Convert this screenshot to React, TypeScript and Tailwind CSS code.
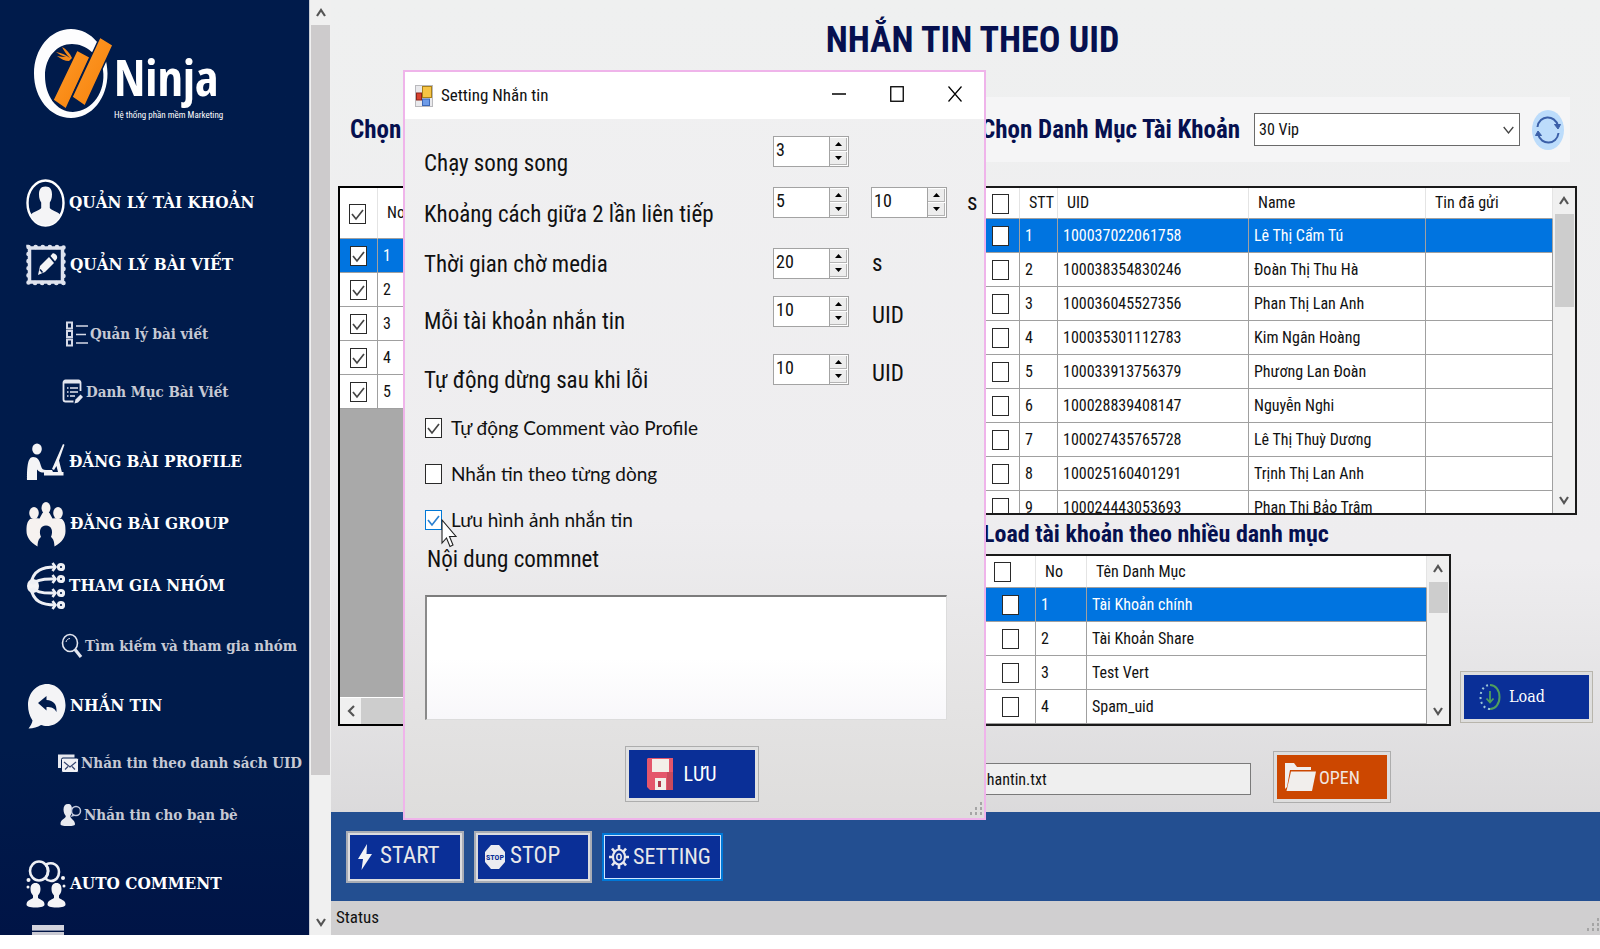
import React from 'react';

const menu = "flex items-center h-[62px] pl-[26px] gap-1 text-[17px] font-bold text-white whitespace-nowrap";
const submenu = "flex items-center gap-[2px] text-[15px] font-bold text-[#c6c9d4] whitespace-nowrap";

const uids = [
  ['100037022061758', 'Lê Thị Cẩm Tú'],
  ['100038354830246', 'Đoàn Thị Thu Hà'],
  ['100036045527356', 'Phan Thị Lan Anh'],
  ['100035301112783', 'Kim Ngân Hoàng'],
  ['100033913756379', 'Phương Lan Đoàn'],
  ['100028839408147', 'Nguyễn Nghi'],
  ['100027435765728', 'Lê Thị Thuỳ Dương'],
  ['100025160401291', 'Trịnh Thị Lan Anh'],
  ['100024443053693', 'Phan Thị Bảo Trâm'],
];

const categories = ['Tài Khoản chính', 'Tài Khoản Share', 'Test Vert', 'Spam_uid'];

/* ---------- Iconos del menú ---------- */

function UserIcon() {
  return (
    <svg width="39" height="48" viewBox="0 0 39 48">
      <ellipse cx="19.5" cy="24" rx="18" ry="22.5" fill="none" stroke="#fff" strokeWidth="2.4" />
      <path d="M19.500 7.500c-5 0-6.500 3.500-6.500 8 0 4 1 6 2.200 8v5.500c-2 3-8 3.500-10.700 7C7.500 42.500 13 46.500 19.500 46.500s12-4 15-10.500c-2.700-3.500-8.700-4-10.700-7v-5.500c1.200-2 2.200-4 2.200-8 0-4.500-1.500-8-6.500-8z" fill="#f4f4f6" />
    </svg>
  );
}

function StampIcon() {
  return (
    <svg width="40" height="42" viewBox="0 0 40 42">
      <rect x="3.500" y="4" width="33" height="34" fill="none" stroke="#dfe3ee" strokeWidth="3.500" />
      <rect x="2.500" y="3" width="35" height="36" fill="none" stroke="#dfe3ee" strokeWidth="4.500" strokeLinecap="round" strokeDasharray="0.1 7" />
      <path d="M12 31l2-9 9-9 5 6-9 9z" fill="#f4f4f6" />
      <path d="M24.500 12l2-2.500c1-1 3 .2 4 1.800s.8 3 0 4l-1.500 2z" fill="#f4f4f6" />
      <path d="M14 25.500l2.500 3" stroke="#001b4c" strokeWidth="1.500" />
    </svg>
  );
}

function ListIcon() {
  return (
    <svg width="22" height="26" viewBox="0 0 22 26" fill="none" stroke="#d5d9e6">
      <rect x="1" y="1.500" width="5" height="6" strokeWidth="2" />
      <rect x="1" y="10" width="5" height="6" strokeWidth="2" />
      <rect x="1" y="18.500" width="5" height="6" strokeWidth="2" />
      <path d="M10 5h12M10 13.500h10M10 22h12" strokeWidth="1.600" />
    </svg>
  );
}

function NoteIcon() {
  return (
    <svg width="22" height="26" viewBox="0 0 22 26" fill="none" stroke="#e3e6ef">
      <path d="M18.500 12V3.500a2 2 0 0 0-2-2H3.500a2 2 0 0 0-2 2v17a2 2 0 0 0 2 2h8" strokeWidth="1.800" />
      <path d="M2 3h16" strokeWidth="3" />
      <path d="M5 9h1.500M5 13h1.500M5 17h1.500M8 9h8M8 13h8M8 17h5" strokeWidth="1.700" />
      <path d="M12.500 24.500l1-4 5-5 2.500 2.500-5 5.500z" fill="#e3e6ef" stroke="none" />
    </svg>
  );
}

function DeskIcon() {
  return (
    <svg width="39" height="38" viewBox="0 0 39 38" fill="#f4f4f6">
      <ellipse cx="11" cy="6" rx="4.800" ry="5.500" />
      <path d="M1 37c0-12 .5-23 6-23 4.500 0 6.500 3 8 9 1 3 2 4 5 4h6l1 2h10.500v3.500H18v-3c-3 0-5-.5-7-3V37z" />
      <path d="M26 26L37 1l1.500.8L33 17.500l3 12-4-.5-1.500-6-2.500 4z" />
    </svg>
  );
}

function GroupIcon() {
  return (
    <svg width="40" height="46" viewBox="0 0 40 46" fill="#f6f2f0">
      <ellipse cx="20" cy="7" rx="4.500" ry="6" />
      <ellipse cx="8" cy="12" rx="4.800" ry="6" />
      <ellipse cx="32" cy="12" rx="4.800" ry="6" />
      <path d="M4 18l4.500-1 5 .5L16.500 12h7l3 5.500 5-.5 4.500 1c3 3 3.500 6 3.500 12 0 6-3 11-11 15.500-.3-5-1-7.500-3.500-9.500 2.500-6 .5-11.500-5-11.500s-7.500 5.500-5 11.500c-2.500 2-3.200 4.500-3.500 9.500C4 41 .5 36 .5 30c0-6 .5-9 3.500-12z" />
    </svg>
  );
}

function NetworkIcon() {
  return (
    <svg width="39" height="48" viewBox="0 0 39 48" fill="none" stroke="#eef0f5" strokeWidth="3">
      <ellipse cx="7" cy="24" rx="6" ry="7" fill="#f4f4f6" stroke="none" />
      <path d="M5 22C7 8 17 5 29 5M6 22c5-5 13-5.500 23-5M6 26c5 5 13 5.500 23 5M5 26c2 14 12 17 24 17" />
      <path d="M26.500 1l3 4-3 4M26.500 13l3 4-3 4M26.500 27l3 4-3 4M26.500 39l3 4-3 4" strokeWidth="2.600" />
      <circle cx="35" cy="5" r="2.600" />
      <circle cx="35" cy="17" r="2.600" />
      <circle cx="35" cy="31" r="2.600" />
      <circle cx="35" cy="43" r="2.600" />
    </svg>
  );
}

function SearchIcon() {
  return (
    <svg width="22" height="26" viewBox="0 0 22 26" fill="none" stroke="#e3e6ef">
      <ellipse cx="9" cy="10" rx="7.500" ry="8.500" strokeWidth="1.600" />
      <path d="M5 9c.5-2 2-3.500 4-3.500" strokeWidth="1" />
      <path d="M14 16.500l6 7.500" strokeWidth="3.200" />
    </svg>
  );
}

function ReplyIcon() {
  return (
    <svg width="40" height="46" viewBox="0 0 40 46">
      <path d="M21 1c10.500 0 18.500 9 18.500 21S31.500 43 21 43c-2.500 0-4.500-.5-6-1-3.500 2-7.500 3.500-12.500 3.500 2.500-3 3.500-5.500 4-8C3.500 33 2 28 2 22 2 10 10.500 1 21 1z" fill="#f4f4f6" />
      <path d="M12 20l8.500-7v4c7 .5 10.500 4 10 12-2-4-5-5-10-5v3.500z" fill="#001b4c" />
    </svg>
  );
}

function MailsIcon() {
  return (
    <svg width="22" height="22" viewBox="0 0 22 22">
      <path d="M1 2.500h16.500V6H5.500v10H1z" fill="#e6e8ef" />
      <rect x="4.500" y="6" width="17" height="14.500" rx="1.500" fill="#f0f1f5" stroke="#001b4c" />
      <path d="M7 10l6 5 6-5M8 17.500l3-3M18 17.500l-3-3" stroke="#37466f" strokeWidth="1.200" fill="none" />
    </svg>
  );
}

function FriendIcon() {
  return (
    <svg width="22" height="24" viewBox="0 0 22 24">
      <path d="M8 1c-3 0-4.500 2-4.500 5.500S5 12 5.800 13c0 3-5.300 3-5.300 8 0 1.500 2 2 7.500 2s7-.5 7-2c0-4-4.500-5-4.800-8C11 12 12 10 12 6.500S11 1 8 1z" fill="#e8eaf0" />
      <circle cx="16" cy="8" r="4.500" fill="none" stroke="#c3c9dc" strokeWidth="1.500" />
      <path d="M12.500 11l-2 3 4-1" fill="#c3c9dc" />
    </svg>
  );
}

function CommentIcon() {
  return (
    <svg width="40" height="48" viewBox="0 0 40 48">
      <g fill="none" stroke="#eef0f5" strokeWidth="2.600">
        <ellipse cx="13" cy="11" rx="9" ry="9.500" />
        <path d="M20 4.500c7-3.500 13 1 13 7.500 0 5-3 9-8 9-2.500 0-4-.8-5.500-2.500 3-4 4-9 .5-14z" />
      </g>
      <g fill="#f4f4f6">
        <circle cx="2.500" cy="20" r="2" />
        <circle cx="2" cy="27" r="1.500" />
        <circle cx="37" cy="18" r="2" />
        <circle cx="38" cy="26" r="1.500" />
        <path d="M9.500 23c-3.500 0-5 2.500-5 6s1.300 5 2.500 6.500v2.500C4 40 .5 40.500.5 44.500c0 2 3 3 9 3s9-1 9-3c0-4-3.500-4.500-6.500-6.500v-2.500c1.200-1.500 2.500-3 2.500-6.500s-1.500-6-5-6z" />
        <path d="M30.500 23c-3.500 0-5 2.500-5 6s1.300 5 2.500 6.500v2.500c-3 2-6.500 2.500-6.500 6.500 0 2 3 3 9 3s9-1 9-3c0-4-3.500-4.500-6.500-6.500v-2.500c1.200-1.500 2.500-3 2.500-6.500s-1.500-6-5-6z" />
      </g>
    </svg>
  );
}

function Logo() {
  return (
    <svg width="80" height="94" viewBox="0 0 80 94">
      <defs>
        <linearGradient id="blade" x1="0" y1="0" x2="1" y2="1">
          <stop offset="0" stopColor="#ff9c2b" />
          <stop offset="1" stopColor="#f57f08" />
        </linearGradient>
      </defs>
      <path d="M37 1C16 1 0 21 0 45.500S16 90 37 90s36.500-20 36.500-44.500C73.500 21 58 1 37 1zm1 15c14 0 27 11 31 26 3 21-10 41-30 42C22 84 11 67 11 48s12-32 27-32z" fill="#fdfdfe" />
      <path d="M43 22l13 7-24 52-13-9z" fill="url(#blade)" stroke="#001b4c" strokeWidth="1.500" />
      <path d="M66 9l13 8-28 61-13-9z" fill="url(#blade)" stroke="#001b4c" strokeWidth="1.500" />
      <path d="M22 24c6 1 10 3 14 6-4-4-6-7-8-11 4 2 8 6 10 11l-3 3c-4 0-8-2-12-5 3 .5 6 1 9 1-4-1-7-3-10-5z" fill="#f58a1a" />
    </svg>
  );
}

/* ---------- Controles ---------- */

function Check({ label, checked = false, accent = false }: { label: string; checked?: boolean; accent?: boolean }) {
  return (
    <span className="relative inline-block h-5 w-[17px] shrink-0 align-middle">
      <input
        type="checkbox"
        aria-label={label}
        defaultChecked={checked}
        className={
          accent
            ? "peer block h-5 w-[17px] appearance-none border border-[#0078d7] bg-white"
            : "peer block h-5 w-[17px] appearance-none border border-[#2a2a2a] bg-white"
        }
      />
      <svg
        viewBox="0 0 17 20"
        className={
          accent
            ? "pointer-events-none absolute inset-0 hidden peer-checked:block text-[#2a7fd0]"
            : "pointer-events-none absolute inset-0 hidden peer-checked:block text-[#444]"
        }
      >
        <path d="M3 10l4 5 7-9" fill="none" stroke="currentColor" strokeWidth="1.700" />
      </svg>
    </span>
  );
}

function Spin({ label, value }: { label: string; value: number }) {
  return (
    <div className="flex h-[31px] w-[76px] border border-[#a3a3a3] bg-white">
      <input
        type="text"
        aria-label={label}
        defaultValue={value}
        className="min-w-0 flex-1 bg-transparent pb-1 pl-[2px] text-[18px] leading-6 outline-none"
      />
      <div className="mr-[1px] flex w-[18px] flex-col gap-[1px] border-l border-[#a3a3a3] py-[1px]">
        <button aria-label="Tăng" className="flex flex-1 items-center justify-center border-r border-b border-[#b4b4b4] bg-[#ededed]">
          <svg width="7" height="4"><path d="M0 4L3.500 0 7 4z" /></svg>
        </button>
        <button aria-label="Giảm" className="flex flex-1 items-center justify-center border-r border-b border-[#b4b4b4] bg-[#ededed]">
          <svg width="7" height="4"><path d="M0 0h7L3.500 4z" /></svg>
        </button>
      </div>
    </div>
  );
}

function Arrow({ dir }: { dir: 'up' | 'down' | 'left' }) {
  const d = dir === 'up' ? 'M2 9l4-6 4 6' : dir === 'down' ? 'M2 3l4 6 4-6' : 'M9 1L4 6l5 5';
  return (
    <svg width="12" height="12" viewBox="0 0 12 12" fill="none" stroke="#555" strokeWidth="2.200">
      <path d={d} />
    </svg>
  );
}

function Grip() {
  return (
    <svg width="13" height="13" viewBox="0 0 13 13" fill="#a5a5a5">
      <path d="M10 0h2v3h-2zM10 5h2v3h-2zM10 10h2v3h-2zM5 5h2v3H5zM5 10h2v3H5zM0 10h2v3H0z" />
    </svg>
  );
}

/* ---------- Barra lateral ---------- */

function Sidebar() {
  return (
    <aside className="w-[310px] shrink-0 overflow-hidden border-r border-[#c8ccd4] bg-gradient-to-b from-[#001b4b] from-80% to-[#001446] font-['DejaVu_Serif_Condensed','DejaVu_Serif',serif]">
      <div className="flex h-[172px] pt-[28px] pl-[34px]">
        <Logo />
        <div className="flex flex-col pt-[17px] text-white">
          <span className="font-['Open_Sans_Condensed','Open_Sans',sans-serif] text-[50px] leading-[64px]">Ninja</span>
          <span className="font-['Roboto_Condensed',sans-serif] text-[9px] leading-3">Hệ thống phần mềm Marketing</span>
        </div>
      </div>
      <nav>
        <a href="#tai-khoan" className={menu}><UserIcon />QUẢN LÝ TÀI KHOẢN</a>
        <a href="#bai-viet" className={menu}><StampIcon />QUẢN LÝ BÀI VIẾT</a>
        <div className="pt-[9px] pb-[10px]">
          <a href="#ds-bai-viet" className={submenu + " h-[58px] pl-[66px]"}><ListIcon />Quản lý bài viết</a>
          <a href="#danh-muc" className={submenu + " h-[58px] pl-[62px]"}><NoteIcon />Danh Mục Bài Viết</a>
        </div>
        <a href="#profile" className={menu}><DeskIcon />ĐĂNG BÀI PROFILE</a>
        <a href="#group" className={menu}><GroupIcon />ĐĂNG BÀI GROUP</a>
        <a href="#tham-gia" className={menu}><NetworkIcon />THAM GIA NHÓM</a>
        <a href="#tim-kiem" className={submenu + " h-[58px] pl-[61px]"}><SearchIcon />Tìm kiếm và tham gia nhóm</a>
        <a href="#nhan-tin" className={menu}><ReplyIcon />NHẮN TIN</a>
        <a href="#nhan-tin-uid" className={submenu + " h-[52px] pl-[57px]"}><MailsIcon />Nhắn tin theo danh sách UID</a>
        <a href="#nhan-tin-ban-be" className={submenu + " h-[52px] pl-[60px]"}><FriendIcon />Nhắn tin cho bạn bè</a>
        <a href="#auto-comment" className={menu + " mt-3"}><CommentIcon />AUTO COMMENT</a>
        <div className="h-5 pt-[10px] pl-8">
          <svg width="32" height="10">
            <rect width="32" height="5" fill="#d3d3dc" />
            <rect y="5" width="32" height="1" fill="#7c86a2" />
            <rect y="7" width="32" height="3" fill="#c9c9d2" />
          </svg>
        </div>
      </nav>
    </aside>
  );
}

/* ---------- Tablas ---------- */

const cell = "h-[34px] border-r border-b border-[#a0a0a0] px-[5px] whitespace-nowrap";
const th = "border-r border-b border-r-[#e4e4e4] border-b-[#a0a0a0] bg-white px-[9px] text-left font-normal whitespace-nowrap";

function LeftTable() {
  return (
    <div className="flex flex-1 flex-col border-2 border-black bg-[#a9a9a9]">
      <table className="w-full table-fixed border-separate border-spacing-0">
        <colgroup>
          <col className="w-[38px]" />
          <col className="w-[50px]" />
          <col />
        </colgroup>
        <thead>
          <tr className="h-[51px]">
            <th className={th}><Check label="Chọn tất cả" checked /></th>
            <th className={th}>No</th>
            <th className={th}></th>
          </tr>
        </thead>
        <tbody>
          {[1, 2, 3, 4, 5].map((n) => (
            <tr key={n} className={n === 1 ? "bg-[#0074e0] text-white" : "bg-white"}>
              <td className={cell + " pl-[10px]"}><Check label={`Dòng ${n}`} checked /></td>
              <td className={cell}>{n}</td>
              <td className={cell}></td>
            </tr>
          ))}
        </tbody>
      </table>
      <div className="mt-auto flex h-[27px] border-t border-white bg-[#f0f0f0]">
        <button aria-label="Cuộn trái" className="flex w-[21px] items-center justify-center"><Arrow dir="left" /></button>
        <div className="w-[300px] bg-[#cdcdcd]"></div>
      </div>
    </div>
  );
}

function UidTable() {
  return (
    <div className="mr-[23px] flex h-[329px] overflow-hidden border-2 border-[#1a1a1a] bg-white">
      <div className="flex-1 overflow-hidden">
        <table className="w-full table-fixed border-separate border-spacing-0">
          <colgroup>
            <col className="w-[43px]" />
            <col className="w-[38px]" />
            <col className="w-[191px]" />
            <col className="w-[177px]" />
            <col />
          </colgroup>
          <thead>
            <tr className="h-[31px]">
              <th className={th + " pl-[15px]"}><Check label="Chọn tất cả UID" /></th>
              <th className={th}>STT</th>
              <th className={th}>UID</th>
              <th className={th}>Name</th>
              <th className={th}>Tin đã gửi</th>
            </tr>
          </thead>
          <tbody>
            {uids.map(([uid, name], i) => (
              <tr key={uid} className={i === 0 ? "bg-[#0074e0] text-white" : "bg-white"}>
                <td className={cell + " pl-[15px]"}><Check label={name} /></td>
                <td className={cell}>{i + 1}</td>
                <td className={cell}>{uid}</td>
                <td className={cell}>{name}</td>
                <td className={cell}></td>
              </tr>
            ))}
          </tbody>
        </table>
      </div>
      <div className="flex w-[22px] flex-col items-center bg-[#f0f0f0]">
        <button aria-label="Cuộn lên" className="flex h-[26px] items-center"><Arrow dir="up" /></button>
        <div className="h-[93px] w-[19px] bg-[#cdcdcd]"></div>
        <button aria-label="Cuộn xuống" className="mt-auto flex h-[26px] items-center"><Arrow dir="down" /></button>
      </div>
    </div>
  );
}

function CategoryTable() {
  return (
    <div className="flex h-[172px] w-[476px] overflow-hidden border-2 border-[#1a1a1a] bg-white">
      <div className="flex-1 overflow-hidden">
        <table className="w-full table-fixed border-separate border-spacing-0">
          <colgroup>
            <col className="w-[59px]" />
            <col className="w-[51px]" />
            <col />
          </colgroup>
          <thead>
            <tr className="h-[32px]">
              <th className={th + " pl-[17px]"}><Check label="Chọn tất cả danh mục" /></th>
              <th className={th}>No</th>
              <th className={th}>Tên Danh Mục</th>
            </tr>
          </thead>
          <tbody>
            {categories.map((c, i) => (
              <tr key={c} className={i === 0 ? "bg-[#0074e0] text-white" : "bg-white"}>
                <td className={cell + " pl-[25px]"}><Check label={c} /></td>
                <td className={cell}>{i + 1}</td>
                <td className={cell}>{c}</td>
              </tr>
            ))}
          </tbody>
        </table>
      </div>
      <div className="flex w-[22px] flex-col items-center bg-[#f0f0f0]">
        <button aria-label="Cuộn lên" className="flex h-[26px] items-center"><Arrow dir="up" /></button>
        <div className="h-[31px] w-[19px] bg-[#cdcdcd]"></div>
        <button aria-label="Cuộn xuống" className="mt-auto flex h-[26px] items-center"><Arrow dir="down" /></button>
      </div>
    </div>
  );
}

/* ---------- Diálogo de ajustes ---------- */

function SettingDialog() {
  return (
    <section
      role="dialog"
      aria-label="Setting Nhắn tin"
      className="absolute top-[70px] left-[72px] w-[583px] border-2 border-[#efb4ea] bg-gradient-to-b from-[#f0f0f1] via-[#eeedef] via-60% to-[#dedddc] text-[#111]"
    >
      <header className="flex h-[47px] items-center bg-white pl-[10px]">
        <svg width="18" height="22" viewBox="0 0 18 22">
          <rect x=".5" y=".5" width="17" height="21" fill="#e9e9ec" stroke="#b9b9bd" />
          <rect x="7.500" y="1.500" width="9" height="11" fill="#f6c445" stroke="#a8801b" />
          <rect x="1.500" y="8" width="5" height="7" fill="#d8412f" stroke="#8d2418" />
          <rect x="7.500" y="14" width="7" height="6.500" fill="#6d9be8" stroke="#3c67b5" />
        </svg>
        <h2 className="flex-1 pl-2 text-[17px]">Setting Nhắn tin</h2>
        <div className="flex items-center pb-[3px]">
          <button aria-label="Thu nhỏ" className="flex w-[58px] justify-center">
            <svg width="14" height="16"><path d="M0 8h14" stroke="#000" strokeWidth="1.500" /></svg>
          </button>
          <button aria-label="Phóng to" className="flex w-[58px] justify-center">
            <svg width="14" height="16"><rect x=".75" y=".75" width="12.500" height="14.500" fill="none" stroke="#000" strokeWidth="1.300" /></svg>
          </button>
          <button aria-label="Đóng" className="flex w-[58px] justify-center">
            <svg width="14" height="16"><path d="M.5.5l13 15M13.500.5l-13 15" stroke="#000" strokeWidth="1.200" /></svg>
          </button>
        </div>
      </header>

      <div className="flex pl-[19px]">
        <div className="flex w-[349px] flex-col pt-[31px] text-[23px] leading-7">
          <span>Chạy song song</span>
          <span className="mt-[23px]">Khoảng cách giữa 2 lần liên tiếp</span>
          <span className="mt-[22px]">Thời gian chờ media</span>
          <span className="mt-[29px]">Mỗi tài khoản nhắn tin</span>
          <span className="mt-[31px]">Tự động dừng sau khi lỗi</span>
        </div>
        <div className="flex flex-col pt-[17px] text-[23px] leading-[31px]">
          <Spin label="Chạy song song" value={3} />
          <div className="mt-[20px] flex items-center">
            <Spin label="Khoảng cách từ" value={5} />
            <div className="pl-[22px]"><Spin label="Khoảng cách đến" value={10} /></div>
            <span className="pl-5">s</span>
          </div>
          <div className="mt-[30px] flex items-center gap-[23px]">
            <Spin label="Thời gian chờ media" value={20} />
            <span>s</span>
          </div>
          <div className="mt-[17px] flex items-start gap-[23px]">
            <Spin label="Mỗi tài khoản nhắn tin" value={10} />
            <span className="pt-1">UID</span>
          </div>
          <div className="mt-[23px] flex items-start gap-[23px]">
            <Spin label="Tự động dừng sau khi lỗi" value={10} />
            <span className="pt-1">UID</span>
          </div>
        </div>
      </div>

      <div className="flex flex-col gap-[18px] pt-[19px] pl-[20px] font-['Lato',sans-serif] text-[19px] leading-7">
        <label className="flex items-center gap-[9px]"><Check label="Tự động Comment vào Profile" checked />Tự động Comment vào Profile</label>
        <label className="flex items-center gap-[9px]"><Check label="Nhắn tin theo từng dòng" />Nhắn tin theo từng dòng</label>
        <label className="flex items-center gap-[9px]"><Check label="Lưu hình ảnh nhắn tin" checked accent />Lưu hình ảnh nhắn tin</label>
      </div>

      <label htmlFor="comment" className="block pt-[12px] pl-[22px] text-[23px] leading-7">Nội dung commnet</label>
      <textarea
        id="comment"
        className="mt-[21px] mr-[37px] ml-[20px] block h-[125px] w-[522px] resize-none border border-t-2 border-l-2 border-[#dcdcdc] border-t-[#7c7c7c] border-l-[#8a8a8a] bg-gradient-to-b from-white from-50% to-[#f8f7fa] outline-none"
      ></textarea>

      <div className="flex justify-center pt-[26px] pr-[6px] pb-[16px]">
        <button className="flex h-[56px] w-[134px] items-center gap-[10px] border border-[#adadad] bg-[#0a2f97] pl-[21px] text-[20px] text-white shadow-[inset_0_0_0_3px_#e1e1e1]">
          <svg width="27" height="32" viewBox="0 0 27 32">
            <path d="M1 0h25v32H3l-3-3V1z" fill="#e4566b" />
            <path d="M20 14h6v18h-6z" fill="#c94a5c" />
            <rect x="5" y="1" width="17" height="13" fill="#f3efe9" />
            <rect x="8" y="20" width="11" height="12" fill="#f3efe9" />
            <rect x="11" y="23" width="3" height="6" fill="#b13a4c" />
          </svg>
          LƯU
        </button>
      </div>

      <div className="absolute right-[1px] bottom-[3px]"><Grip /></div>
      <svg className="absolute top-[447px] left-[36px]" width="17" height="29" viewBox="0 0 17 29">
        <path d="M1 1v23l4.500-5 3.500 8.500 3-1.500-3.500-8.500H15z" fill="#fff" stroke="#222" strokeWidth="1.100" />
      </svg>
    </section>
  );
}

const actionBtn = "flex h-[52px] items-center border-2 border-[#a9adb5] bg-[#0a2f97] text-[23px] text-[#e8e8ea] shadow-[inset_0_0_0_2px_#dcdcde]";
const heading = "text-[25px] font-bold text-[#06104f] whitespace-nowrap";

export default function App() {
  return (
    <div className="flex min-h-screen items-start bg-white font-['Roboto_Condensed','Liberation_Sans',sans-serif] text-[16px] text-[#111]">
      <div className="flex flex-1">
        <Sidebar />

        <div className="flex w-[21px] shrink-0 flex-col items-center bg-[#f0f0f0]">
          <button aria-label="Cuộn lên" className="flex h-[25px] items-center"><Arrow dir="up" /></button>
          <div className="h-[750px] w-[19px] bg-[#cdcbcc]"></div>
          <button aria-label="Cuộn xuống" className="mt-auto flex h-[26px] items-center"><Arrow dir="down" /></button>
        </div>

        <main className="relative flex min-w-0 flex-1 flex-col bg-gradient-to-b from-[#eff0f0] via-[#eeedef] via-60% to-[#d2d1d2]">
          <h1 className="pt-4 pb-[33px] pl-[14px] text-center text-[36px] leading-[48px] font-bold text-[#06104f]">NHẮN TIN THEO UID</h1>

          <div className="flex pl-[7px]">
            {/* Lista de bài viết */}
            <div className="flex min-w-0 flex-1 flex-col pb-[86px]">
              <div className={heading + " flex h-[66px] items-center pl-[12px]"}>Chọn</div>
              <div className="mt-[23px] flex flex-1"><LeftTable /></div>
            </div>

            {/* Cuentas */}
            <div className="w-[625px] shrink-0">
              <div className="mr-[30px] flex h-[65px] items-center bg-[#f5f5f6] pl-[6px]">
                <label htmlFor="category" className={heading}>Chọn Danh Mục Tài Khoản</label>
                <div className="relative ml-auto">
                  <select id="category" className="block h-[33px] w-[266px] appearance-none border border-[#6a6a6a] bg-white pl-1 text-[16px]">
                    <option>30 Vip</option>
                  </select>
                  <svg className="pointer-events-none absolute top-[13px] right-[6px]" width="11" height="9" viewBox="0 0 11 9">
                    <path d="M.7 1l4.800 6 4.800-6" fill="none" stroke="#444" strokeWidth="1.300" />
                  </svg>
                </div>
                <button aria-label="Tải lại" className="mr-[6px] ml-3">
                  <svg width="32" height="40" viewBox="0 0 32 40" fill="none" stroke="#3b5fa8" strokeWidth="2">
                    <ellipse cx="16" cy="20" rx="16" ry="20" fill="#bcdcfb" stroke="none" />
                    <path d="M5.500 17C7 5 23 4 26 16M26.500 23C25 35 9 36 6 24" />
                    <path d="M22.500 14.500h6l-2.500 4.500z" fill="#3b5fa8" strokeWidth="1" />
                    <path d="M3.500 25.500h6L6 21z" fill="#3b5fa8" strokeWidth="1" />
                  </svg>
                </button>
              </div>
              <div className="mt-6"><UidTable /></div>

              <h2 className="h-[39px] pl-[8px] text-[24px] leading-[39px] font-bold whitespace-nowrap text-[#06104f]">Load tài khoản theo nhiều danh mục</h2>
              <div className="flex items-end gap-[9px]">
                <CategoryTable />
                <button className="mb-[3px] flex h-[52px] w-[133px] items-center gap-2 border border-[#b8b5ac] bg-[#0a2f97] pl-[18px] font-['DejaVu_Serif_Condensed','DejaVu_Serif',serif] text-[16px] text-white shadow-[inset_0_0_0_3px_#dedede]">
                  <svg width="22" height="28" viewBox="0 0 22 28" fill="none">
                    <path d="M11 2c5.500 0 9.500 5 9.500 12S16.500 26 11 26" stroke="#4f9e5e" strokeWidth="2" />
                    <path d="M11 26C5.500 26 1.500 21 1.500 14S5.500 2 11 2" stroke="#9cc7d6" strokeWidth="2" strokeDasharray="2 3" />
                    <path d="M11 8v11M7.500 15.500L11 19.500l3.500-4" stroke="#4f9e5e" strokeWidth="1.800" />
                  </svg>
                  Load
                </button>
              </div>

              <div className="flex items-center gap-[22px] pt-[25px] pb-[9px]">
                <input
                  type="text"
                  aria-label="Tệp nhắn tin"
                  defaultValue="nhantin.txt"
                  className="mt-1 h-[32px] w-[276px] border border-[#7a7a7a] bg-[#efefef] pl-[3px] text-[16px]"
                />
                <button className="flex h-[52px] w-[118px] items-center gap-[3px] border border-[#adadad] bg-[#cc4700] pl-[11px] text-[18px] text-[#f1e6e0] shadow-[inset_0_0_0_3px_#dedede]">
                  <svg width="31" height="28" viewBox="0 0 31 28" fill="#f1eeec">
                    <path d="M0 0h9l3 4h14v3H5L2 24 0 26z" />
                    <path d="M6 8.500h25L27 28H1.500z" />
                  </svg>
                  OPEN
                </button>
              </div>
            </div>
          </div>

          <div className="flex h-[89px] items-center gap-[10px] bg-[#234f91] pl-[15px]">
            <button className={actionBtn + " w-[118px] gap-2 pl-[10px]"}>
              <svg width="14" height="26" viewBox="0 0 14 26" fill="#f4f4f6"><path d="M9 0L0 15h5L3.500 26 14 10H8.500z" /></svg>
              START
            </button>
            <button className={actionBtn + " w-[118px] gap-[5px] pl-[9px]"}>
              <svg width="20" height="24" viewBox="0 0 20 24">
                <path d="M6 0h8l6 7v10l-6 7H6l-6-7V7z" fill="#ececf0" />
                <text x="10" y="15" textAnchor="middle" fontSize="8" fontWeight="700" fill="#0a2f97">STOP</text>
              </svg>
              STOP
            </button>
            <button className="flex h-[48px] w-[121px] items-center gap-1 border-2 border-[#0078d7] bg-[#0a2f97] pl-[5px] text-[22px] text-[#e8e8ea] shadow-[inset_0_0_0_1px_#cfe6ff]">
              <svg width="20" height="24" viewBox="0 0 20 24" fill="none" stroke="#e8e8ee">
                <ellipse cx="10" cy="12" rx="6" ry="7.500" strokeWidth="2.200" />
                <ellipse cx="10" cy="12" rx="2.200" ry="3" strokeWidth="1.600" />
                <path d="M10 0v4M10 20v4M0 12h3.500M16.500 12H20M3 3.500L5.500 6.500M14.500 17.500L17 20.500M17 3.500L14.500 6.500M5.500 17.500L3 20.500" strokeWidth="2.600" />
              </svg>
              SETTING
            </button>
          </div>

          <footer className="flex flex-1 items-center justify-between bg-[#d0cfd0] pl-[5px] text-[17px]">
            <span>Status</span>
            <div className="self-end pb-1"><Grip /></div>
          </footer>

          <SettingDialog />
        </main>
      </div>
    </div>
  );
}
